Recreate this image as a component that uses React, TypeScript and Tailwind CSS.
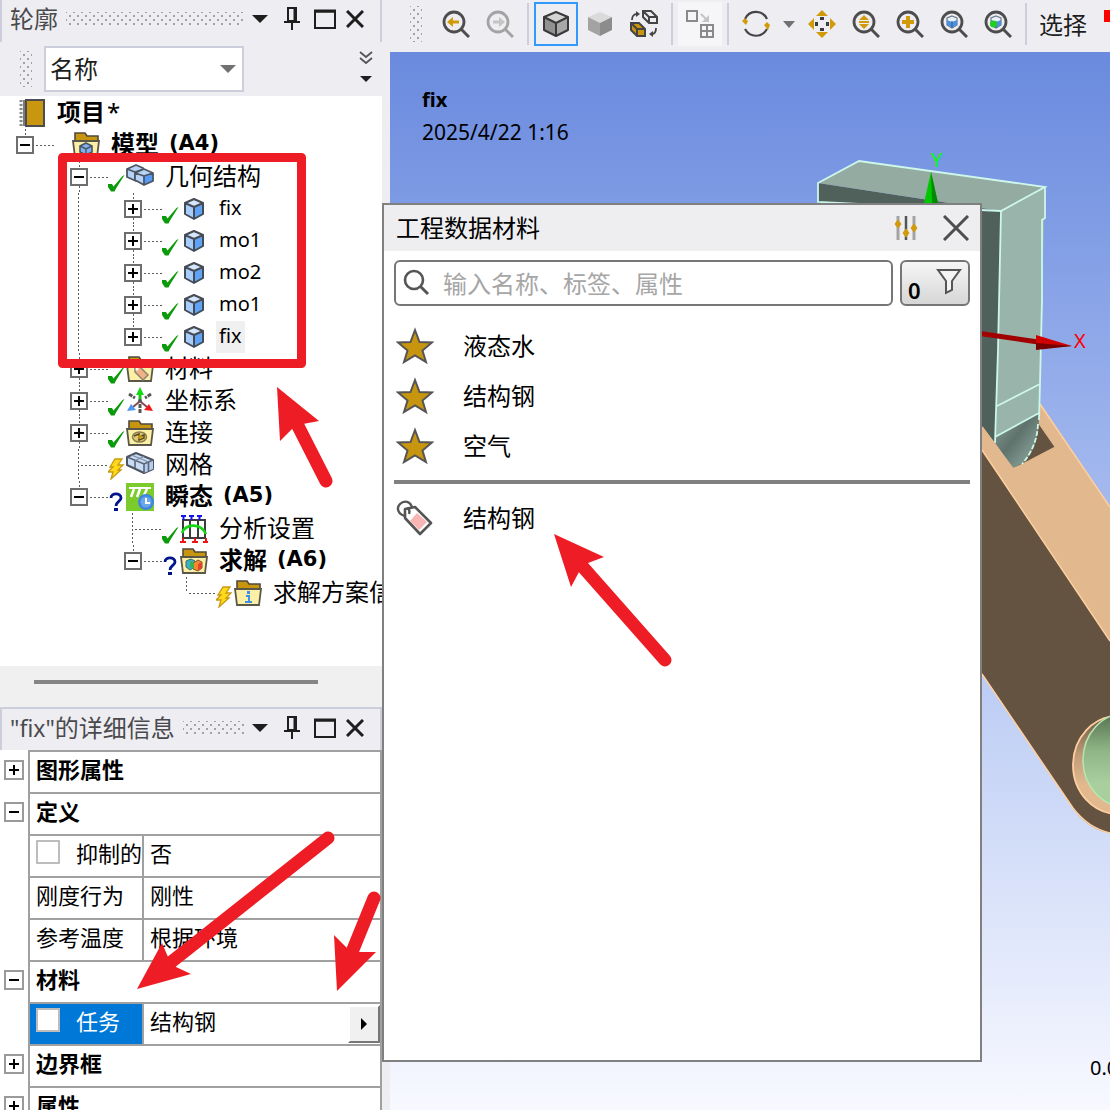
import { useState, type ReactNode } from 'react';

const LATIN = "font-['Noto_Sans','Noto_Sans_CJK_SC',sans-serif]";
const VDOTS = 'bg-[repeating-linear-gradient(to_bottom,#5c5c5c_0_2px,transparent_2px_4px)]';
const HDOTS = 'bg-[repeating-linear-gradient(to_right,#5c5c5c_0_2px,transparent_2px_4px)]';
const GRIP =
  'bg-[radial-gradient(circle,#a2a2a8_1px,transparent_1px),radial-gradient(circle,#a2a2a8_1px,transparent_1px)] bg-[length:8px_8px] bg-[position:0_0,4px_4px]';

/* ---------- small glyphs ---------- */

function Svg({ w = 28, h = 28, children }: { w?: number; h?: number; children: ReactNode }) {
  return (
    <svg width={w} height={h} viewBox={`0 0 ${w} ${h}`} fill="none" className="shrink-0" aria-hidden="true">
      {children}
    </svg>
  );
}

const Check = () => (
  <Svg w={18} h={18}>
    <path d="M0 10h4l1.500 2.500L14.500 2l2-1L8 14.500 6.500 17.500H3L0 13z" fill="#0a9a0a" />
  </Svg>
);
const Bolt = () => (
  <Svg w={18} h={22}>
    <path d="M7 1h7l-4 6h5l-5 5h3L3 21l2-7H0l5-5H2z" fill="#ffd91a" stroke="#c79a10" strokeWidth="1.300" />
  </Svg>
);
const Question = () => (
  <Svg w={18} h={20}>
    <path d="M3 6c0-5.500 10-5.500 10 0 0 3.500-5 3.500-5 8" stroke="#00148c" strokeWidth="2.800" />
    <rect x="6" y="16" width="4" height="3" fill="#00148c" />
  </Svg>
);

const Cube = () => (
  <Svg>
    <path d="M14 4l9 4v11l-9 5-9-5V8z" fill="#a9cdfb" />
    <path d="M14 4l9 4-9 4-9-4z" fill="#d6e7fd" />
    <path d="M14 12l9-4v11l-9 5z" fill="#5fa3f7" />
    <path d="M14 4l9 4v11l-9 5-9-5V8zM5 8l9 4 9-4M14 12v12" stroke="#454b55" strokeWidth="2" strokeLinejoin="round" />
  </Svg>
);
const Cubes = () => (
  <Svg>
    <path d="M1 6l9-4 7 3v5l-7 8-9-4z" fill="#b6d2f8" stroke="#4d5561" strokeWidth="1.800" strokeLinejoin="round" />
    <path d="M1 6l8 3v8M9 9l9-3" stroke="#4d5561" strokeWidth="1.800" />
    <path d="M9 10l9-4 9 4v8l-9 4-9-5z" fill="#b6d2f8" />
    <path d="M18 13l9-3v8l-9 4z" fill="#559bf5" />
    <path d="M9 10l9-4 9 4v8l-9 4-9-5zM9 10l9 3 9-3M18 13v9" stroke="#4d5561" strokeWidth="1.800" strokeLinejoin="round" />
  </Svg>
);
const MeshIcon = () => (
  <Svg>
    <path d="M1 6l9-4 17 7v9l-9 4L1 14z" fill="#c9dcf6" stroke="#4d5561" strokeWidth="2" strokeLinejoin="round" />
    <path d="M18 13l9-4v9l-9 4z" fill="#b5cdf0" />
    <path d="M1 6l17 7 9-4M18 13v9M9 9v8M22.500 11v9" stroke="#5a6472" strokeWidth="1.600" />
    <path d="M5.500 4l17 7M18 5.500l-9 4" stroke="#7f8da2" strokeWidth="1.300" />
  </Svg>
);
const Folder = ({ children }: { children: ReactNode }) => (
  <Svg>
    <path d="M3 11V2h10l2 3h11v6z" fill="#c8950f" stroke="#4f4a3c" strokeWidth="1.600" />
    <path d="M1 10h26l-2 16H3z" fill="#fbf0a6" stroke="#5b5748" strokeWidth="1.800" />
    {children}
  </Svg>
);
const ModelIcon = () => (
  <Folder>
    <path d="M14 12l6 3v6l-6 3-6-3v-6z" fill="#7fb2f4" stroke="#4a5563" strokeWidth="1.600" />
    <path d="M8 15l6 3 6-3M14 18v6" stroke="#4a5563" strokeWidth="1.400" />
  </Folder>
);
const MaterialIcon = () => (
  <Folder>
    <path d="M9 13l5-1 8 8-5 5-8-8z" fill="#f2b184" stroke="#8b8577" strokeWidth="1.500" />
    <circle cx="11" cy="14" r="1.500" fill="#fff" />
  </Folder>
);
const ConnectionIcon = () => (
  <Folder>
    <ellipse cx="13.500" cy="18" rx="7" ry="5" fill="#dccb76" stroke="#8a7d4c" strokeWidth="1.500" />
    <path d="M8 17l5-2v6l5-2v-3l-5 2" stroke="#5c4b1e" strokeWidth="1.600" />
    <circle cx="14" cy="18" r="2" fill="#c8950f" />
  </Folder>
);
const SolutionIcon = () => (
  <Folder>
    <path d="M6 14l5-2 4 2v6l-5 3-4-3z" fill="#3aaecb" stroke="#3f6f60" />
    <path d="M13 16l5-3 4 2v6l-4 3-5-2z" fill="#f08a2c" stroke="#7b5a2c" />
    <path d="M10 14l4 2v6l-4-2z" fill="#3db34a" />
    <path d="M18 17l4-2v6l-4 3z" fill="#e2442d" />
  </Folder>
);
const InfoIcon = () => (
  <Folder>
    <path d="M12 17h3v6M11 23h7" stroke="#3f8fe8" strokeWidth="2" />
    <rect x="13" y="12" width="3" height="3" fill="#3f8fe8" />
  </Folder>
);
const CoordIcon = () => (
  <Svg>
    <path d="M3 7l6 4M25 7l-6 4M14 17v9" stroke="#555" strokeWidth="3" strokeDasharray="4 1" />
    <path d="M14 13V7" stroke="#20c020" strokeWidth="3" />
    <path d="M14 0l4 8h-8z" fill="#16d816" />
    <path d="M13 15l-6 5M15 15l6 5" stroke="#8a4a55" strokeWidth="2" />
    <path d="M1 24l4-7 5 6z" fill="#4f96f0" />
    <path d="M27 24l-4-7-5 6z" fill="#f01818" />
    <circle cx="14" cy="14" r="2" fill="#555" />
  </Svg>
);
const TransientIcon = () => (
  <Svg>
    <rect width="28" height="28" fill="#7ccb2d" />
    <path d="M3 5h22" stroke="#fff" strokeWidth="2" />
    <path d="M8 6l-3 8M14 6l-3 8M21 6l-3 6" stroke="#fff" strokeWidth="2.500" />
    <circle cx="20" cy="19" r="8" fill="#3f86dc" />
    <circle cx="20" cy="19" r="5.500" fill="#6aa6ec" />
    <path d="M20 15v5h4" stroke="#fff" strokeWidth="2" />
  </Svg>
);
const AnalysisIcon = () => (
  <Svg>
    <path d="M3 5h22v18H3zM10 5v18M18 5v18" stroke="#3c3c3c" strokeWidth="2" />
    <path d="M1 1h5M9 1h5M17 1h5M3.500 1v4M11.500 1v4M19.500 1v4" stroke="#1414f0" strokeWidth="2" />
    <path d="M2 18C6 8 21 8 26 19" stroke="#14d814" strokeWidth="2.600" />
    <path d="M0 27h6M12 27h6M23 27h5M3 23v4M15 23v4M26 23v4" stroke="#f01414" strokeWidth="2" />
  </Svg>
);
const ProjectIcon = () => (
  <Svg w={28} h={30}>
    <path d="M2 2h6v26H2z" fill="#f4f4f4" />
    <path d="M3 2v26" stroke="#8a8a8a" strokeWidth="3" strokeDasharray="2 2" />
    <path d="M6 2v26" stroke="#555" strokeWidth="1.500" />
    <rect x="8" y="2" width="18" height="26" fill="#c9970f" stroke="#4d4d4d" strokeWidth="2" />
  </Svg>
);

/* ---------- panel title bar ---------- */

const Caret = ({ color = '#1e1e1e' }: { color?: string }) => (
  <Svg w={16} h={8}>
    <path d="M0 0h16L8 8z" fill={color} />
  </Svg>
);

function TitleBar({ children, top = false }: { children: ReactNode; top?: boolean }) {
  return (
    <div className={`flex shrink-0 items-center border-x-2 border-[#cccedb] bg-[#eeeef2] pr-4 pl-2 ${top ? 'h-[42px] pb-1' : 'h-[43px] border-t-2 pb-1'}`}>
      <h2 className={`text-2xl leading-8 whitespace-nowrap text-[#4a4a4e] ${LATIN}`}>{children}</h2>
      <span className={`mx-2 h-[14px] flex-1 ${GRIP}`} />
      <button aria-label="菜单" className="flex w-4 justify-center"><Caret /></button>
      <button aria-label="固定" className="ml-4 flex w-4 justify-center">
        <Svg w={16} h={24}>
          <path d="M4 1h8v13H4z" stroke="#1e1e1e" strokeWidth="2" />
          <path d="M11 1v13" stroke="#1e1e1e" strokeWidth="3" />
          <path d="M0 15h16M8 15v8" stroke="#1e1e1e" strokeWidth="2" />
        </Svg>
      </button>
      <button aria-label="最大化" className="ml-[14px] flex">
        <Svg w={22} h={20}>
          <path d="M1 2.500h20V19H1z" stroke="#1e1e1e" strokeWidth="2" />
          <path d="M0 2h22" stroke="#1e1e1e" strokeWidth="3" />
        </Svg>
      </button>
      <button aria-label="关闭" className="ml-[10px] flex">
        <Svg w={18} h={18}>
          <path d="M1 1l16 16M17 1L1 17" stroke="#1e1e1e" strokeWidth="3" />
        </Svg>
      </button>
    </div>
  );
}

/* ---------- outline tree ---------- */

type Node = {
  label: string;
  tag?: string;
  guides: boolean[];
  box?: '+' | '-';
  above?: boolean;
  below?: boolean;
  status?: ReactNode;
  icon: ReactNode;
  selected?: boolean;
};

const NODES: Node[] = [
  { label: '模型', tag: '(A4)', guides: [], box: '-', above: true, icon: <ModelIcon /> },
  { label: '几何结构', guides: [false], box: '-', above: true, below: true, status: <Check />, icon: <Cubes /> },
  { label: 'fix', guides: [false, true], box: '+', above: true, below: true, status: <Check />, icon: <Cube /> },
  { label: 'mo1', guides: [false, true], box: '+', above: true, below: true, status: <Check />, icon: <Cube /> },
  { label: 'mo2', guides: [false, true], box: '+', above: true, below: true, status: <Check />, icon: <Cube /> },
  { label: 'mo1', guides: [false, true], box: '+', above: true, below: true, status: <Check />, icon: <Cube /> },
  { label: 'fix', guides: [false, true], box: '+', above: true, status: <Check />, icon: <Cube />, selected: true },
  { label: '材料', guides: [false], box: '+', above: true, below: true, status: <Check />, icon: <MaterialIcon /> },
  { label: '坐标系', guides: [false], box: '+', above: true, below: true, status: <Check />, icon: <CoordIcon /> },
  { label: '连接', guides: [false], box: '+', above: true, below: true, status: <Check />, icon: <ConnectionIcon /> },
  { label: '网格', guides: [false], above: true, below: true, status: <Bolt />, icon: <MeshIcon /> },
  { label: '瞬态', tag: '(A5)', guides: [false], box: '-', above: true, status: <Question />, icon: <TransientIcon /> },
  { label: '分析设置', guides: [false, false], above: true, below: true, status: <Check />, icon: <AnalysisIcon /> },
  { label: '求解', tag: '(A6)', guides: [false, false], box: '-', above: true, status: <Question />, icon: <SolutionIcon /> },
  { label: '求解方案信息', guides: [false, false, false], above: true, status: <Bolt />, icon: <InfoIcon /> },
];

function Expander({ sign, big = false }: { sign: '+' | '-'; big?: boolean }) {
  return (
    <button
      aria-label={sign === '+' ? '展开' : '折叠'}
      className={`flex shrink-0 items-center justify-center border-2 bg-white ${big ? 'size-5 border-[#9a9a9a]' : 'size-[18px] border-[#6e6e6e]'}`}
    >
      <Svg w={12} h={12}>
        <path d={sign === '+' ? 'M1 6h10M6 1v10' : 'M1 6h10'} stroke="#000" strokeWidth="2" />
      </Svg>
    </button>
  );
}

function TreeRow({ n }: { n: Node }) {
  const latin = /^[a-z]/.test(n.label);
  return (
    <li className="flex h-8 items-center">
      {n.guides.map((on, i) => (
        <span key={i} className="flex h-8 w-[54px] shrink-0 pl-6">
          {on && <span className={`w-px ${VDOTS}`} />}
        </span>
      ))}
      <span className="flex h-8 w-[54px] shrink-0 items-center pl-4">
        <span className={`flex h-8 flex-col ${n.box ? 'w-[18px] items-center' : 'w-[9px] items-end'}`}>
          <span className={`w-px flex-1 ${n.above ? VDOTS : ''}`} />
          {n.box && <Expander sign={n.box} />}
          <span className={`w-px flex-1 ${n.below ? VDOTS : ''}`} />
        </span>
        <span className={`ml-0.5 h-px flex-1 ${HDOTS}`} />
      </span>
      <span className="flex w-[18px] shrink-0 items-end self-end pb-px">{n.status}</span>
      {n.icon}
      <span
        className={`ml-2 flex h-8 items-center px-[3px] pb-0.5 whitespace-nowrap text-black ${LATIN} ${latin ? 'text-xl' : 'text-2xl'} ${n.tag ? 'font-bold' : ''} ${n.selected ? 'bg-[#f0f0f0]' : ''}`}
      >
        {n.label}
        {n.tag && <span className="ml-2.5 pb-0.5 font-['DejaVu_Sans',sans-serif] text-[21px] leading-7">{n.tag}</span>}
      </span>
    </li>
  );
}

function Outline() {
  return (
    <section className="flex min-h-0 flex-1 flex-col">
      <TitleBar top>轮廓</TitleBar>
      <div className="flex h-[54px] shrink-0 items-center bg-[#eeeef2] pr-2 pl-5">
        <span className={`h-9 w-3 ${GRIP}`} />
        <label className="relative ml-3 flex h-[46px] w-[200px] items-center">
          <select aria-label="筛选" className="size-full appearance-none border-2 border-[#cccedb] bg-white pb-0.5 pl-1 text-2xl leading-8 text-[#1e1e1e]">
            <option>名称</option>
          </select>
          <span className="pointer-events-none absolute right-2"><Caret color="#717171" /></span>
        </label>
        <button aria-label="更多" className="ml-auto flex pb-1">
          <Svg w={16} h={34}>
            <path d="M2 2l6 5 6-5M2 8l6 5 6-5" stroke="#555" strokeWidth="1.800" />
            <path d="M2 26h12l-6 6z" fill="#1e1e1e" />
          </Svg>
        </button>
      </div>
      <ul className="min-h-0 flex-1 overflow-hidden bg-white pt-px">
        <li className="flex h-8 items-center pl-[18px]">
          <ProjectIcon />
          <span className={`ml-[11px] pb-0.5 text-2xl leading-7 font-bold ${LATIN}`}>
            项目<span className="ml-0.5 font-normal">*</span>
          </span>
        </li>
        {NODES.map((n, i) => (
          <TreeRow key={i} n={n} />
        ))}
      </ul>
      <div className="flex h-[41px] shrink-0 items-start bg-[#f0f0f0] pt-[14px] pr-16 pl-[34px]">
        <span className="h-1 flex-1 bg-[#858585]" />
      </div>
    </section>
  );
}

/* ---------- details grid ---------- */

type Prop = { name: string; value?: string; box?: '+' | '-'; check?: boolean; active?: boolean };
const PROPS: Prop[] = [
  { name: '图形属性', box: '+' },
  { name: '定义', box: '-' },
  { name: '抑制的', value: '否', check: true },
  { name: '刚度行为', value: '刚性' },
  { name: '参考温度', value: '根据环境' },
  { name: '材料', box: '-' },
  { name: '任务', value: '结构钢', check: true, active: true },
  { name: '边界框', box: '+' },
  { name: '属性', box: '+' },
];

function Details() {
  return (
    <section className="h-[403px] shrink-0 overflow-hidden bg-white">
      <TitleBar>
        <span className="text-[23px]">"fix"</span>的详细信息
      </TitleBar>
      <table className="w-full table-fixed border-collapse text-[22px] leading-8 text-black">
        <colgroup>
          <col className="w-[29px]" />
          <col className="w-[114px]" />
          <col />
        </colgroup>
        <tbody>
          {PROPS.map((p) => (
            <tr key={p.name} className="h-[42px]">
              <td className="px-1 pb-1">{p.box && <Expander sign={p.box} big />}</td>
              {p.value === undefined ? (
                <th colSpan={2} scope="rowgroup" className="border-2 border-[#a0a0a0] px-1.5 pb-2 text-left font-bold">
                  {p.name}
                </th>
              ) : (
                <>
                  <th
                    scope="row"
                    className={`overflow-hidden border-2 border-[#a0a0a0] pb-2 pl-1.5 text-left font-normal whitespace-nowrap ${p.active ? 'bg-[#0078d7] text-white' : ''}`}
                  >
                    {p.check ? (
                      <label className="flex items-center">
                        <input type="checkbox" className="mr-4 size-6 shrink-0 appearance-none border-2 border-[#bdbdbd] bg-white" />
                        {p.name}
                      </label>
                    ) : (
                      p.name
                    )}
                  </th>
                  <td className={`border-2 border-[#a0a0a0] pl-1.5 ${p.active ? '' : 'pb-2'}`}>
                    {p.active ? (
                      <div className="flex items-center justify-between">
                        <span className="pb-2">{p.value}</span>
                        <button aria-label="选择材料" className="flex h-[38px] w-8 items-center justify-center border-2 border-t-white border-r-[#777] border-b-[#777] border-l-white bg-[#f0f0f0]">
                          <Svg w={8} h={12}>
                            <path d="M1 0l6 6-6 6z" fill="#000" />
                          </Svg>
                        </button>
                      </div>
                    ) : (
                      p.value
                    )}
                  </td>
                </>
              )}
            </tr>
          ))}
        </tbody>
      </table>
    </section>
  );
}

/* ---------- graphics toolbar ---------- */

const Lens = ({ children, tone = '#4d4d4d' }: { children: ReactNode; tone?: string }) => (
  <Svg>
    <circle cx="12" cy="12" r="10" stroke={tone} strokeWidth="2.800" />
    <path d="M19 19l8 8" stroke={tone} strokeWidth="3" />
    {children}
  </Svg>
);
const ShadedCube = ({ edges = false }: { edges?: boolean }) => (
  <Svg>
    <path d="M14 2l12 5-12 6L2 7z" fill={edges ? '#d4d4d4' : '#dadada'} />
    <path d="M2 7l12 6v13L2 20z" fill={edges ? '#919191' : '#a3a3a3'} />
    <path d="M26 7l-12 6v13l12-6z" fill={edges ? '#a8a8a8' : '#8c8c8c'} />
    {edges && <path d="M14 2l12 5v13l-12 6-12-6V7zM2 7l12 6 12-6M14 13v13" stroke="#3a3a3a" strokeWidth="2" strokeLinejoin="round" />}
  </Svg>
);
const MiniCube = ({ dot = false }: { dot?: boolean }) => (
  <>
    <path d="M12 6l5 2v7l-5 3-5-3V8z" fill="#e8f1fb" stroke="#6c7785" strokeWidth="1.200" />
    <path d="M7 10l5 2 5-2v5l-5 3-5-3z" fill="#4a90e2" />
    <path d="M12 11v7" stroke="#3d5a80" />
    {dot && <circle cx="9.500" cy="14" r="3.500" fill="#1fd01f" />}
  </>
);

const Sep = () => (
  <span className="flex w-3 shrink-0 items-center justify-center">
    <span className="h-[42px] w-0.5 bg-[#cccedb]" />
  </span>
);
const Tool = ({ label, children, look = '' }: { label: string; children: ReactNode; look?: string }) => (
  <button aria-label={label} className={`flex size-11 shrink-0 items-center justify-center ${look}`}>
    {children}
  </button>
);

function Toolbar() {
  return (
    <div className="flex h-[52px] shrink-0 items-center overflow-hidden bg-[#eeeef2] pb-1 pl-5">
      <span className={`h-9 w-3 shrink-0 ${GRIP}`} />
      <span className="w-3 shrink-0" />
      <Tool label="上一视图"><Lens><path d="M5 12l6-5v3.500h6v3h-6V17z" fill="#d19a0a" /></Lens></Tool>
      <Tool label="下一视图"><Lens tone="#a3a3a3"><path d="M19 12l-6-5v3.500H7v3h6V17z" fill="#c4c4c4" /></Lens></Tool>
      <Sep />
      <Tool label="带边着色" look="border-2 border-[#3399ff]"><ShadedCube edges /></Tool>
      <Tool label="着色"><ShadedCube /></Tool>
      <Tool label="切换显示">
        <Svg>
          <path d="M13 1h8l6 6v6h-8l-6-6zM13 1l6 6v6M19 7h8" stroke="#444" strokeWidth="2" />
          <path d="M1 13h8l6 6v7H7l-6-6z" fill="#c8950f" stroke="#444" strokeWidth="2" />
          <path d="M1 13l6 6v7M7 19h8" stroke="#444" strokeWidth="2" />
          <path d="M2 10c0-4 2-6 5-6M26 18c0 4-2 6-4 6" stroke="#444" strokeWidth="1.800" />
          <path d="M6 1l4 3-4 3zM23 21l-4 3 4 3z" fill="#444" />
        </Svg>
      </Tool>
      <Sep />
      <Tool label="分解视图" look="bg-[#f6f6f8]">
        <Svg>
          <path d="M1 1h10v10H1z" stroke="#8a8a8a" strokeWidth="2" />
          <path d="M15 15h12v12H15zM21 15v12M15 21h12" stroke="#8a8a8a" strokeWidth="2" />
          <path d="M15 4l6 6" stroke="#c4c4c4" strokeWidth="2" />
          <path d="M23 5v7h-7z" fill="#c4c4c4" />
        </Svg>
      </Tool>
      <Sep />
      <Tool label="旋转">
        <Svg>
          <path d="M3 9C7 0 20-1 25 9M25 19c-5 9-17 9-22 0" stroke="#444" strokeWidth="2.200" />
          <path d="M0 11l3-3 3 3-2 4zM22 15l3-3 3 3-2 5z" fill="#d19a0a" />
        </Svg>
      </Tool>
      <button aria-label="旋转选项" className="flex w-[22px] shrink-0 justify-center">
        <Svg w={12} h={7}><path d="M0 0h12L6 7z" fill="#717171" /></Svg>
      </button>
      <Tool label="平移">
        <Svg>
          <path d="M14 0l6 6H8zM14 28l6-6H8zM0 14l6-6v12zM28 14l-6-6v12z" fill="#d19a0a" />
          <path d="M12 7h4v3h-4zM12 18h4v3h-4zM7 12h3v4H7zM18 12h3v4h-3z" fill="#3c3c3c" />
        </Svg>
      </Tool>
      <Tool label="缩放"><Lens><path d="M12 5l5 5H7zM12 19l5-5H7zM7 11h10v2H7z" fill="#d19a0a" /></Lens></Tool>
      <Tool label="框选缩放"><Lens><path d="M12 6v12M6 12h12" stroke="#d19a0a" strokeWidth="4" /></Lens></Tool>
      <Tool label="缩放至合适"><Lens><MiniCube /></Lens></Tool>
      <Tool label="缩放到选择"><Lens><MiniCube dot /></Lens></Tool>
      <Sep />
      <span className="ml-[7px] shrink-0 text-2xl leading-8 text-[#1e1e1e]">选择</span>
      <span className="mt-[10px] ml-[17px] h-3 w-4 shrink-0 self-start bg-[#ff0000]" />
    </div>
  );
}

/* ---------- 3D viewport ---------- */

function Scene() {
  return (
    <svg className="absolute top-0 left-0 h-[1058px] w-[720px]" viewBox="390 52 720 1058" role="img" aria-label="几何模型">
      <defs>
        <linearGradient id="tongue" x1="0" y1="0" x2="1" y2="1">
          <stop offset="0" stopColor="#8aa398" />
          <stop offset="0.450" stopColor="#5f726c" />
          <stop offset="1" stopColor="#99b5ab" />
        </linearGradient>
        <linearGradient id="bore" x1="0" y1="0" x2="0" y2="1">
          <stop offset="0" stopColor="#55704f" />
          <stop offset="0.400" stopColor="#8fb587" />
          <stop offset="0.750" stopColor="#a9cf9f" />
        </linearGradient>
        <linearGradient id="rim" x1="0" y1="0" x2="0" y2="1">
          <stop offset="0" stopColor="#6b5845" />
          <stop offset="0.400" stopColor="#c09c79" />
          <stop offset="0.700" stopColor="#e2b98f" />
        </linearGradient>
      </defs>
      <path d="M960 416L1110 641V833Q1090 830 1075 811L960 641z" fill="#645341" />
      <path d="M960 393L1013 469 1040 404 1110 507V641L960 417z" fill="#e2b98f" />
      <path d="M982 674L1073 808Q1088 828 1110 833M982 450L1110 641M1040 404L1110 507" fill="none" stroke="#ffcf9f" strokeWidth="1.500" />
      <path d="M1037 421L1055 447 1013 469z" fill="#645341" stroke="#e2b98f" />
      <path d="M818 183L1001 211 996 444 982 427V205H818z" fill="#50605b" />
      <path d="M818 183L859 161 1045 187 1001 211z" fill="#93aba1" />
      <path d="M1001 211L1045 187 1042 300 1039 413 996 437z" fill="#99b5ab" />
      <path d="M996 436L1039 413Q1040 445 1024 462L1013 469 995 443z" fill="url(#tongue)" />
      <g fill="none" stroke="#cdf7ea" strokeWidth="1.800">
        <path d="M818 202V183L859 161 1045 187 1001 211z" />
        <path d="M1001 211L998 350 995 443M1045 187V218L1042 220V300L1040 383 1039 420M997 406L1040 384M995 437L1039 413" />
        <path d="M1038 424Q1037 447 1022 464" strokeDasharray="5 2" />
      </g>
      <path d="M982 427L1013 469 1024 465" fill="none" stroke="#e2b98f" strokeWidth="2" />
      <ellipse cx="1118" cy="765" rx="45" ry="49" fill="url(#rim)" stroke="#ffcf9f" strokeWidth="1.800" />
      <ellipse cx="1126" cy="760" rx="43" ry="47" fill="url(#bore)" stroke="#b5e8b0" strokeWidth="1.500" />
      <path d="M931 172L938 203H924z" fill="#00c800" />
      <path d="M931 172L938 203H932z" fill="#008a00" />
      <path d="M970 332L1038 342" stroke="#a00000" strokeWidth="5" />
      <path d="M1036 335L1072 346 1036 349z" fill="#d00000" />
      <path d="M1036 343L1072 346 1036 350z" fill="#780000" />
      <g className="font-['Noto_Sans',sans-serif] text-xl">
        <text x="931" y="167" fill="#00ff00">Y</text>
        <text x="1074" y="348" fill="#ff0000">X</text>
        <text x="1090" y="1075" fill="#000">0.00</text>
      </g>
    </svg>
  );
}

function Viewport() {
  return (
    <main className="relative flex-1 overflow-hidden bg-linear-to-b from-[#6a8ade] to-[#f8f9ff]">
      <Scene />
      <div className={`relative pt-8 pl-8 leading-8 text-black ${LATIN}`}>
        <p className="text-xl leading-8 font-bold">fix</p>
        <p className="text-[21px] leading-8">2025/4/22 1:16</p>
      </div>
    </main>
  );
}

/* ---------- material picker ---------- */

const Star = () => (
  <Svg w={38} h={38}>
    <path d="M19 3l4.500 12 12.500.500-9.500 8L30 35l-11-6.500L8 35l3.500-11.500L2 15.500 14.500 15z" fill="#c8950f" stroke="#555" strokeWidth="2" />
  </Svg>
);
const Tag = () => (
  <Svg w={38} h={38}>
    <path d="M9 10l10-2 16 16-11 11L9 19z" fill="#fff" stroke="#555" strokeWidth="2.600" strokeLinejoin="round" />
    <path d="M21 14l10 9-8 8-9-9z" fill="#f9b4b4" />
    <path d="M10 17C2 16 0 9 4 5s11-3 12 4M11 9c2 1 3 3 2 6" stroke="#555" strokeWidth="2.400" />
  </Svg>
);

function MaterialRow({ icon, name }: { icon: ReactNode; name: string }) {
  return (
    <li>
      <button className="flex h-[50px] w-full items-center gap-[29px] pl-0.5 text-left text-2xl leading-8">
        {icon}
        <span className="pb-0.5">{name}</span>
      </button>
    </li>
  );
}

function MaterialPicker() {
  const [query, setQuery] = useState('');
  return (
    <div role="dialog" aria-label="工程数据材料" className="absolute top-[203px] left-[382px] h-[859px] w-[600px] border-2 border-[#808080] bg-white text-black">
      <div className="flex h-[46px] items-center bg-[#eeeef0] pr-[11px] pl-3">
        <h2 className="flex-1 pb-0.5 text-2xl leading-8">工程数据材料</h2>
        <button aria-label="设置" className="mr-[25px] flex">
          <Svg w={24} h={26}>
            <path d="M4 1v24M20 1v24" stroke="#a3a3a3" strokeWidth="3" />
            <path d="M12 1v24" stroke="#555" strokeWidth="2.500" />
            <path d="M4 5l3 4-3 4-3-4zM12 14l3 4-3 4-3-4zM20 9l3 4-3 4-3-4z" fill="#d19a0a" stroke="#d19a0a" />
          </Svg>
        </button>
        <button aria-label="关闭" className="flex">
          <Svg w={26} h={26}>
            <path d="M1 1l24 24M25 1L1 25" stroke="#4d4d4d" strokeWidth="3" />
          </Svg>
        </button>
      </div>
      <div className="flex gap-[7px] pt-[9px] pr-[10px] pl-[10px]">
        <label className="flex h-[46px] flex-1 items-center rounded-md border-2 border-[#767676] pl-[7px]">
          <Svg>
            <circle cx="11" cy="11" r="9" stroke="#555" strokeWidth="2.600" />
            <path d="M17 17l8 8" stroke="#555" strokeWidth="3" />
          </Svg>
          <input
            aria-label="搜索材料"
            value={query}
            onChange={(e) => setQuery(e.target.value)}
            placeholder="输入名称、标签、属性"
            className="ml-3 min-w-0 flex-1 text-2xl leading-8 outline-none placeholder:text-[#a6a6a6]"
          />
        </label>
        <button aria-label="筛选" className="flex h-[46px] w-[70px] items-end justify-between rounded-md border-2 border-[#767676] bg-linear-to-b from-[#f6f6f6] to-[#d6d6d6] px-1.5">
          <span className={`text-[22px] leading-7 font-semibold ${LATIN}`}>0</span>
          <span className="self-start pt-1.5">
            <Svg w={26} h={28}>
              <path d="M2 2h22l-8 11v9l-6 3V13z" fill="#f4f4f4" stroke="#555" strokeWidth="2" />
            </Svg>
          </span>
        </button>
      </div>
      <ul className="mx-[10px] pt-[15px]">
        <MaterialRow icon={<Star />} name="液态水" />
        <MaterialRow icon={<Star />} name="结构钢" />
        <MaterialRow icon={<Star />} name="空气" />
      </ul>
      <hr className="mx-[10px] mt-[9px] h-1 border-0 bg-[#808080]" />
      <ul className="mx-[10px] pt-[9px]">
        <MaterialRow icon={<Tag />} name="结构钢" />
      </ul>
    </div>
  );
}

/* ---------- red markup ---------- */

function Markup() {
  return (
    <svg className="pointer-events-none absolute top-0 left-0 size-[1110px]" viewBox="0 0 1110 1110" aria-hidden="true">
      <rect x="62.500" y="157.500" width="239" height="206" fill="none" stroke="#ee1c24" strokeWidth="9" strokeLinejoin="round" />
      <g stroke="#ee1c24" strokeWidth="13" strokeLinecap="round">
        <path d="M326 481L297 424M665 660L582 566M328 838L170 963M374 898L352 952" />
      </g>
      <g fill="#ee1c24">
        <path d="M277 387L319 421 303 424 292 429 280 441z" />
        <path d="M554 534L604 557 588 563 579 572 571 587z" />
        <path d="M137 989L162 943 168 957 176 967 191 974z" />
        <path d="M337 991L334 935 347 948 359 952 376 952z" />
      </g>
    </svg>
  );
}

export default function App() {
  return (
    <div className="relative flex h-screen overflow-hidden bg-[#eeeef2] font-['Noto_Sans_CJK_SC',sans-serif]">
      <aside className="flex w-[382px] shrink-0 flex-col">
        <Outline />
        <Details />
      </aside>
      <div className="flex min-w-0 flex-1 flex-col pl-2">
        <Toolbar />
        <Viewport />
      </div>
      <MaterialPicker />
      <Markup />
    </div>
  );
}
